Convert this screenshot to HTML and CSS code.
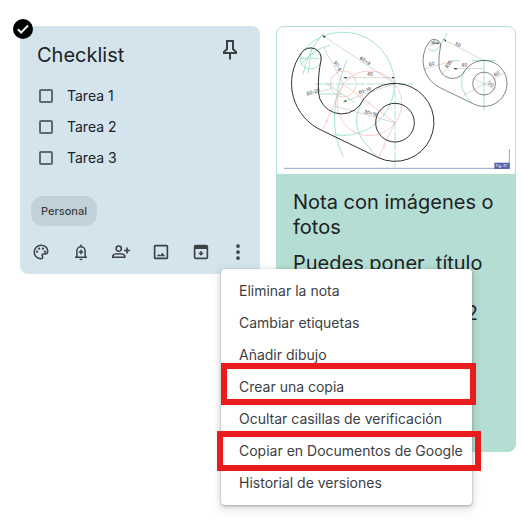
FILE: index.html
```html
<!DOCTYPE html>
<html lang="es">
<head>
  <meta charset="UTF-8">
  <meta name="viewport" content="width=device-width, initial-scale=1.0">
  <title>Notas</title>
  <link rel="stylesheet" href="styles.css">
</head>
<body>
  <main class="board">
    <article class="note note-blue">
      <button class="select-note" aria-label="Seleccionar nota">
        <svg viewBox="0 0 20 20"><circle cx="10" cy="10" r="10" fill="#000"/><path d="M4.800 10.200l3.300 3.300 7-7" fill="none" stroke="#e4eff5" stroke-width="2"/></svg>
      </button>
      <header class="note-header">
        <h2 class="title">Checklist</h2>
        <button class="pin" aria-label="Fijar nota">
          <svg viewBox="0 0 24 24"><path d="M8 3h8M9 3v8l-3 3v1h12v-1l-3-3V3M12 15v6.500" fill="none" stroke="currentColor" stroke-width="2"/></svg>
        </button>
      </header>
      <ul class="tasks">
        <li><input type="checkbox" id="task1"><label for="task1">Tarea 1</label></li>
        <li><input type="checkbox" id="task2"><label for="task2">Tarea 2</label></li>
        <li><input type="checkbox" id="task3"><label for="task3">Tarea 3</label></li>
      </ul>
      <button class="chip">Personal</button>
      <div class="toolbar">
        <button class="tool" aria-label="Opciones de fondo">
          <svg viewBox="0 0 24 24"><path d="M12 3a9 9 0 0 0 0 18c1.500 0 2.300-.9 2.300-2.100 0-1.300-1-1.500-1-2.600 0-1 .7-1.700 1.800-1.700H17c2.600 0 4-1.500 4-4C21 6.300 17 3 12 3z" fill="none" stroke="currentColor" stroke-width="2"/><g fill="currentColor"><circle cx="6.800" cy="11.500" r="1.500"/><circle cx="9.500" cy="7.500" r="1.500"/><circle cx="14.500" cy="7.500" r="1.500"/><circle cx="17.200" cy="11.500" r="1.500"/></g></svg>
        </button>
        <button class="tool" aria-label="Recordarme">
          <svg viewBox="0 0 24 24"><path d="M4 19h16M6.500 19v-8.500a5.500 5.500 0 0 1 11 0V19M12 2v3M12 9v6M9 12h6" fill="none" stroke="currentColor" stroke-width="2"/><path d="M10 21h4a2 2 0 0 1-4 0z" fill="currentColor"/></svg>
        </button>
        <button class="tool" aria-label="Colaborador">
          <svg viewBox="0 0 24 24"><path d="M9 4a3.500 3.500 0 1 1 0 7A3.500 3.500 0 0 1 9 4zM1 19v-1.500c0-2 4.500-3.200 8-3.200s8 1.200 8 3.200V19zM20 6v8M16 10h8" fill="none" stroke="currentColor" stroke-width="2.200"/></svg>
        </button>
        <button class="tool" aria-label="Añadir imagen">
          <svg viewBox="0 0 24 24"><rect x="3.500" y="3.500" width="17" height="17" rx="1" fill="none" stroke="currentColor" stroke-width="2.200"/><path d="M6.500 17.500l2.700-3 1.800 2 2.800-3.500 3.700 4.500z" fill="currentColor"/></svg>
        </button>
        <button class="tool" aria-label="Archivar">
          <svg viewBox="0 0 24 24"><rect x="3.500" y="3.500" width="17" height="17" rx="1.500" fill="none" stroke="currentColor" stroke-width="2.200"/><path d="M4 4h16v4H4zM11 10.500h2V13h3l-4 4-4-4h3z" fill="currentColor"/></svg>
        </button>
        <div class="more">
          <button class="tool tool-more" aria-label="Más" aria-expanded="true">
            <svg viewBox="0 0 24 24"><g fill="currentColor"><circle cx="12" cy="4" r="2.500"/><circle cx="12" cy="12" r="2.500"/><circle cx="12" cy="20" r="2.500"/></g></svg>
          </button>
          <div class="menu">
            <button class="menu-item">Eliminar la nota</button>
            <button class="menu-item">Cambiar etiquetas</button>
            <button class="menu-item">Añadir dibujo</button>
            <button class="menu-item marked">Crear una copia</button>
            <button class="menu-item">Ocultar casillas de verificación</button>
            <button class="menu-item marked marked-wide">Copiar en Documentos de Google</button>
            <button class="menu-item">Historial de versiones</button>
          </div>
        </div>
      </div>
    </article>

    <article class="note note-green">
      <svg class="drawing" viewBox="21 21 714 441" role="img" aria-label="Dibujo técnico">
        <defs>
          <marker id="arrow" viewBox="0 0 10 6" refX="10" refY="3" markerWidth="10" markerHeight="6" markerUnits="userSpaceOnUse" orient="auto-start-reverse"><path d="M0 0l10 3-10 3z" fill="#333"/></marker>
          <g id="hook">
            <path d="M325 413L157 332A155 155 0 0 1 95 98A32 32 0 0 1 153 122Q144 160 145 215A70 70 0 0 0 270 255A117 117 0 1 1 325 413z"/>
            <circle cx="375" cy="308" r="58"/>
          </g>
        </defs>
        <!-- construction lines -->
        <g class="teal">
          <path d="M91 103A155 155 0 1 1 191 344M220 410Q162 300 230 120M275 247Q235 325 300 385Q312 405 325 413M99 163Q112 95 162 38M114 160L124 85M92 135Q125 90 180 75M145 222h70M165 188l90 60"/>
          <circle cx="122" cy="115" r="32"/>
          <path d="M90 115h64M135 192h295M375 180v262" stroke-dasharray="26 5"/>
          <path d="M474 84Q492 104 509 80M478 66Q490 80 503 62M509 80L531 40M583 150Q558 205 605 248M545 122h24M605 122h72M642 118v154"/>
        </g>
        <g class="red">
          <circle cx="220" cy="192" r="39"/>
          <circle cx="298" cy="250" r="97"/>
          <path d="M375 308L220 192L157 332M375 308L325 413M164 300l10 5M338 376l10 5M292 254l8-10"/>
        </g>
        <g class="dims" marker-start="url(#arrow)">
          <path d="M157 46L375 191M162 84L220 192"/>
          <path d="M220 173H375" marker-end="url(#arrow)"/>
          <path d="M220 245L375 191M197 259L375 308M184 205L108 228"/>
          <path d="M520 58L642 122M462 147L550 122M515 165L550 122"/>
          <path d="M550 146H642M582 225L703 159M610 176L674 207M477 77L509 68" marker-end="url(#arrow)"/>
        </g>
        <g class="outline">
          <use href="#hook"/>
          <use href="#hook" transform="translate(421 9) scale(.59)"/>
        </g>
        <g class="values">
          <text transform="translate(268 117) rotate(34)">60+8</text>
          <text transform="translate(190 126) rotate(61)">50-8</text>
          <text x="291" y="169">40</text>
          <text transform="translate(268 223) rotate(-19)">60-16</text>
          <text transform="translate(281 279) rotate(15)">30+16</text>
          <text transform="translate(112 226) rotate(-17)">60-20</text>
          <text transform="translate(554 74) rotate(28)">50</text>
          <text transform="translate(478 139) rotate(-16)">60</text>
          <text transform="translate(532 145) rotate(-52)">R16</text>
          <text x="574" y="142">40</text>
          <text transform="translate(675 170) rotate(-29)">60</text>
          <text transform="translate(652 193) rotate(27)">30</text>
          <text transform="translate(485 74) rotate(-16)">16</text>
        </g>
        <path d="M42 445H718V387" class="frame"/>
        <rect x="673" y="428" width="46" height="19" fill="#5565b5"/>
        <text x="677" y="442" class="figure">Fig. 41</text>
      </svg>
      <div class="note-text">
        <h2 class="title">Nota con imágenes o fotos</h2>
        <p class="body-text">Puedes poner&nbsp; título</p>
        <p class="body-text last-line">2</p>
      </div>
    </article>
  </main>
</body>
</html>
```
FILE: styles.css
```css
* {
  box-sizing: border-box;
}
body {
  margin: 0;
  background: #fff;
  color: #202124;
  font-family: "Google Sans", Inter, sans-serif;
}
button {
  padding: 0;
  border: none;
  background: none;
  color: inherit;
  font: inherit;
  cursor: pointer;
}
svg {
  display: block;
}
.board {
  display: grid;
  grid-template-columns: 1fr 1fr;
  gap: 16px;
  align-items: start;
  min-height: 100vh;
  padding: 26px 6px 14px 20px;
}
.note {
  position: relative;
  border-radius: 8px;
}
.note-blue {
  z-index: 1;
  padding-bottom: 6px;
  background: #d4e4ed;
}
.note-green {
  min-height: 426px;
  border: 1px solid #b4ddd3;
  background: #b4ddd3;
}
.select-note {
  position: absolute;
  top: -7px;
  left: -7px;
  width: 20px;
  height: 20px;
}
.note-header {
  display: flex;
  justify-content: space-between;
  padding: 17px 18px 0 17px;
}
.title,
.body-text {
  margin: 0;
  font-size: 20px;
  font-weight: 400;
  line-height: 25px;
}
.pin {
  width: 24px;
  height: 24px;
  margin-top: -5px;
  color: #3c4043;
}
.tasks {
  margin: 12px 0 23px;
  padding: 0 19px;
  list-style: none;
}
.tasks li {
  display: flex;
  align-items: center;
  gap: 14px;
  height: 31px;
  font-size: 14px;
}
.tasks input {
  appearance: none;
  width: 14px;
  height: 14px;
  margin: 0;
  border: 2px solid #5f6a70;
  border-radius: 2px;
}
.chip {
  display: block;
  height: 30px;
  margin-left: 11px;
  padding: 0 10px;
  border-radius: 12px;
  background: #c2d0d9;
  color: #3c4043;
  font-size: 11px;
  font-weight: 500;
}
.toolbar {
  display: flex;
  margin-top: 10px;
  padding-left: 1px;
  color: #3c4347;
}
.tool {
  display: flex;
  align-items: center;
  justify-content: center;
  width: 40px;
  height: 32px;
}
.tool svg {
  width: 18px;
  height: 18px;
}
.tool-more {
  width: 34px;
}
.more {
  position: relative;
}
.menu {
  position: absolute;
  top: 33px;
  left: 0;
  min-width: 251px;
  padding: 5px 0 7px;
  border-radius: 4px;
  background: #fff;
  color: #3c4043;
  box-shadow: 0 1px 3px rgba(60, 64, 67, 0.4), 0 3px 8px 2px rgba(60, 64, 67, 0.15);
}
.menu-item {
  position: relative;
  display: block;
  width: 100%;
  height: 32px;
  padding: 0 8px 0 18px;
  font-size: 14px;
  text-align: left;
  white-space: nowrap;
}
.marked::after {
  content: "";
  position: absolute;
  inset: -7px -4px -3px 0;
  border: 6px solid #e81c1c;
}
.marked-wide::after {
  inset: -3px -9px -5px -4px;
}
.drawing {
  width: 100%;
  border-radius: 7px 7px 0 0;
  background: #fff;
}
.drawing .outline {
  fill: none;
  stroke: #333;
  stroke-width: 3;
}
.drawing .teal {
  fill: none;
  stroke: #a5e2d0;
  stroke-width: 3;
}
.drawing .red {
  fill: none;
  stroke: #f5b5b0;
  stroke-width: 2;
}
.drawing .dims {
  fill: none;
  stroke: #888;
  stroke-width: 1;
}
.drawing .values {
  fill: #333;
  font-size: 14px;
}
.drawing .frame {
  fill: none;
  stroke: #96a0d2;
  stroke-width: 3;
}
.drawing .figure {
  fill: #fff;
  font-size: 11px;
}
.note-text {
  padding: 16px;
}
.body-text {
  margin-top: 11px;
}
.last-line {
  margin-top: 25px;
  padding-right: 21px;
  text-align: right;
}
```
